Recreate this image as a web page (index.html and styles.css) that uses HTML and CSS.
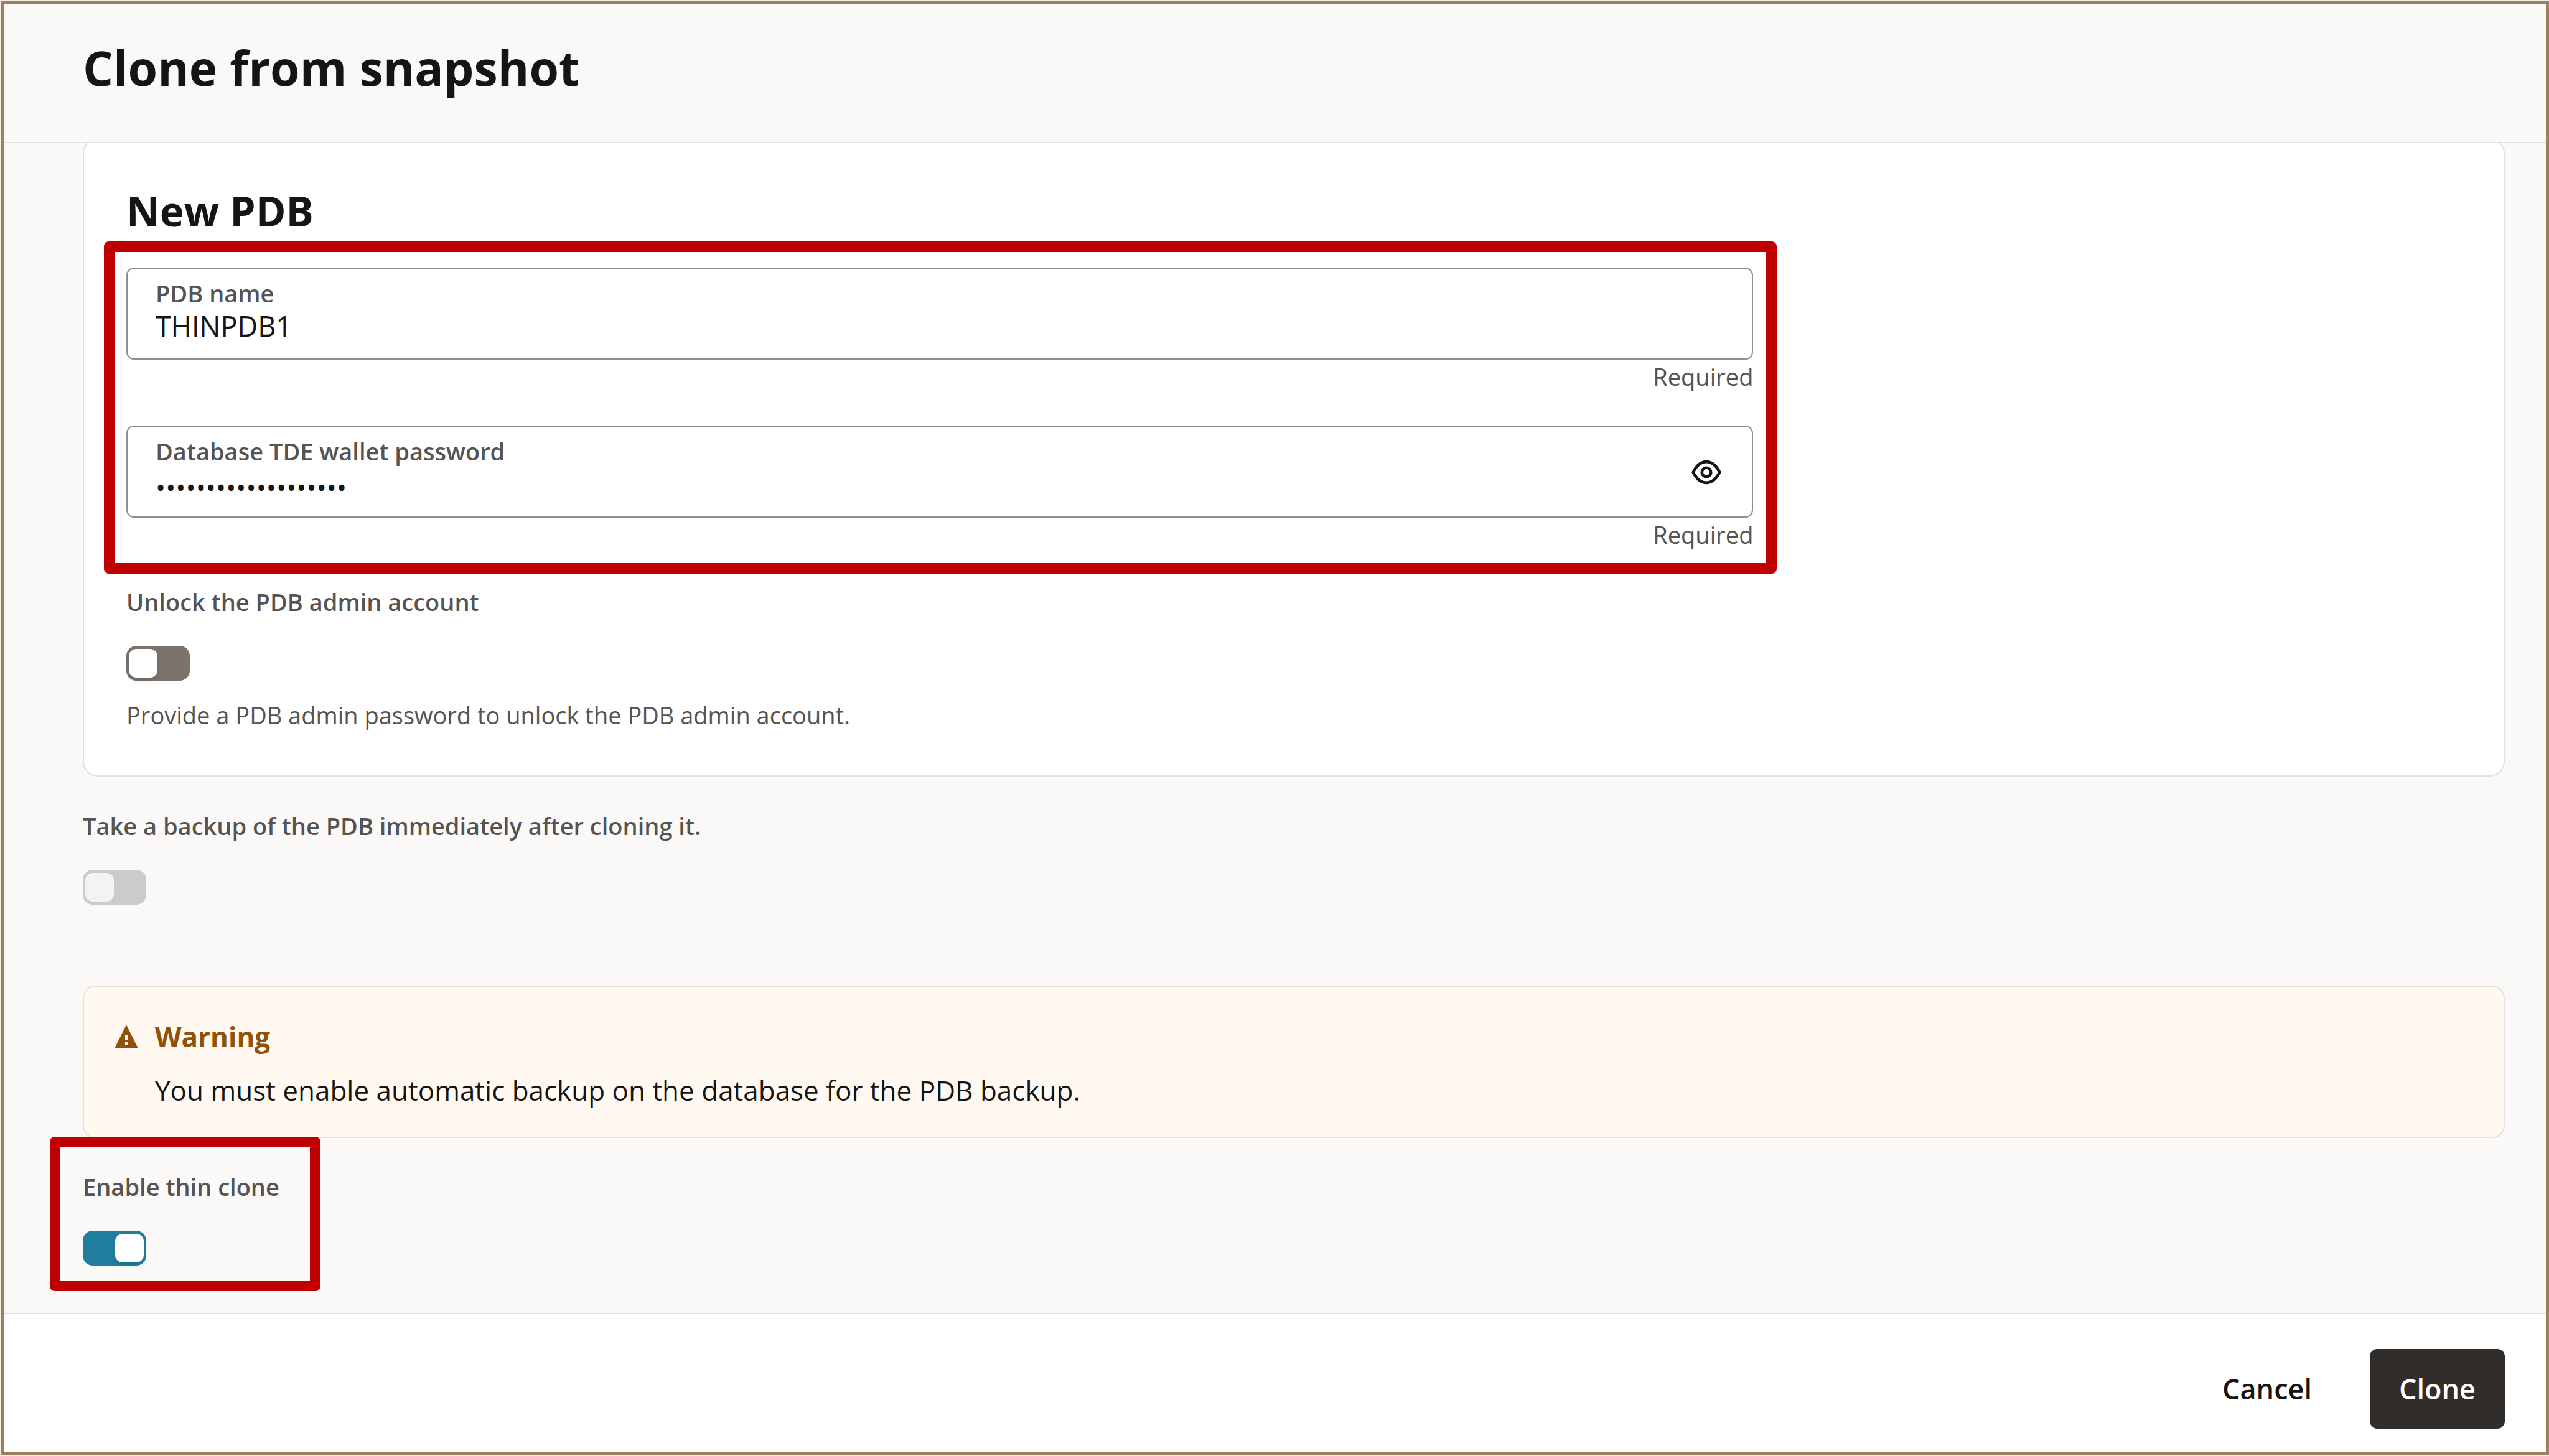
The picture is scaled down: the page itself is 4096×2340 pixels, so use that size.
FILE: index.html
```html
<!DOCTYPE html>
<html lang="en">
<head>
<meta charset="utf-8">
<meta name="viewport" content="width=device-width, initial-scale=1">
<title>Clone from snapshot</title>
<link rel="stylesheet" href="styles.css">
</head>
<body>
<form class="dialog">
  <header class="dialog-header">
    <h1 class="dialog-title">Clone from snapshot</h1>
  </header>

  <main class="dialog-body">
    <section class="card">
      <h2 class="card-title">New PDB</h2>
      <div class="fields callout callout-fields">
        <div class="field-group">
          <div class="field">
            <div class="field-main">
              <label class="field-label" for="pdb-name">PDB name</label>
              <input class="field-input" id="pdb-name" type="text" value="THINPDB1">
            </div>
          </div>
          <span class="field-note">Required</span>
        </div>
        <div class="field-group">
          <div class="field">
            <div class="field-main">
              <label class="field-label" for="tde-password">Database TDE wallet password</label>
              <input class="field-input field-input-secret" id="tde-password" type="password" value="walletpassword12345">
            </div>
            <button class="reveal" type="button" aria-label="Show password">
              <svg class="reveal-icon" viewBox="0 0 24 24" fill="none" stroke="currentColor" stroke-width="2" aria-hidden="true">
                <path d="M2.9 12C5.1 7.6 8.3 4.8 12 4.8S18.9 7.6 21.1 12C18.9 16.4 15.7 19.2 12 19.2S5.1 16.4 2.9 12Z"/>
                <circle cx="12" cy="12" r="3.1"/>
              </svg>
            </button>
          </div>
          <span class="field-note">Required</span>
        </div>
      </div>

      <div class="switch-field switch-field-unlock">
        <label class="switch-label" for="unlock-admin">Unlock the PDB admin account</label>
        <input class="switch" id="unlock-admin" type="checkbox" role="switch">
        <p class="switch-help">Provide a PDB admin password to unlock the PDB admin account.</p>
      </div>
    </section>

    <div class="switch-field switch-field-backup">
      <label class="switch-label" for="backup">Take a backup of the PDB immediately after cloning it.</label>
      <input class="switch" id="backup" type="checkbox" role="switch" disabled>
    </div>

    <section class="warning">
      <svg class="warning-icon" viewBox="0 0 38 38" aria-hidden="true">
        <path fill="currentColor" fill-rule="evenodd" d="M19 0L38 38H0ZM17 16V25H21V16ZM17 28V32H21V28Z"/>
      </svg>
      <div class="warning-text">
        <h3 class="warning-title">Warning</h3>
        <p class="warning-message">You must enable automatic backup on the database for the PDB backup.</p>
      </div>
    </section>

    <div class="switch-field switch-field-thin callout callout-thin">
      <label class="switch-label" for="thin-clone">Enable thin clone</label>
      <input class="switch" id="thin-clone" type="checkbox" role="switch" checked>
    </div>
  </main>

  <footer class="dialog-footer">
    <button class="button" type="button">Cancel</button>
    <button class="button button-primary" type="button">Clone</button>
  </footer>
</form>
</body>
</html>
```
FILE: styles.css
```css
:root {
  --ink: #161513;
  --ink-soft: #555452;
  --line: #e3e1df;
  --canvas: #fbf9f8;
  --callout: #c00000;
}

* {
  box-sizing: border-box;
}

body {
  margin: 0;
  padding: 1px 0 1px 1px;
  min-height: 100vh;
  display: flex;
  background: #f3eee8;
  color: var(--ink);
  font-family: "Open Sans", "Noto Sans", sans-serif;
  font-size: 44px;
  line-height: 56px;
}

h1, h2, h3, p {
  margin: 0;
}

input, button {
  font: inherit;
  color: inherit;
}

.dialog {
  flex: 1;
  min-width: 0;
  display: flex;
  flex-direction: column;
  border: 5px solid #9e7f5e;
  background: var(--canvas);
}

.dialog-header {
  padding: 51px 66px 67px 127px;
  border-bottom: 2px solid var(--line);
}

.dialog-title {
  font-size: 77px;
  line-height: 104px;
  font-weight: 700;
}

.dialog-body {
  flex: 1;
  padding: 0 66px 76px 127px;
  overflow: hidden;
}

.card {
  margin-top: -8px;
  padding: 74px 68px 72px;
  border: 2px solid var(--line);
  border-radius: 24px;
  background: #fff;
}

.card-title {
  font-size: 66px;
  line-height: 80px;
  font-weight: 700;
}

/* Red frames that point the reader to the relevant controls */
.callout {
  position: relative;
}

.callout::after {
  content: "";
  position: absolute;
  border: 17px solid var(--callout);
  border-radius: 8px;
  pointer-events: none;
}

.callout-fields::after {
  inset: -42px -38px -38px -36px;
}

.callout-thin::after {
  inset: -55px -66px -41px -53px;
}

.fields {
  width: calc(70% - 12px);
  margin-top: 52px;
  display: flex;
  flex-direction: column;
  gap: 54px;
}

.field-group {
  display: flex;
  flex-direction: column;
  gap: 2px;
}

.field {
  display: flex;
  align-items: center;
  padding: 14px 45px 24px;
  border: 2px solid #8f8e8c;
  border-radius: 12px;
  background: #fff;
}

.field-main {
  flex: 1;
  display: flex;
  flex-direction: column;
}

.field-label,
.switch-label {
  color: var(--ink-soft);
  font-size: 38px;
  line-height: 50px;
  font-weight: 600;
}

.field-input {
  width: 100%;
  height: 56px;
  padding: 0;
  border: 0;
  outline: 0;
  background: none;
  font-size: 45px;
}

.field-input-secret {
  padding-top: 12px;
  font-size: 43px;
}

.field-note,
.switch-help {
  color: var(--ink-soft);
  font-size: 38px;
  line-height: 50px;
}

.field-note {
  text-align: right;
}

.reveal {
  display: flex;
  margin-top: 12px;
  padding: 0;
  border: 0;
  background: none;
}

.reveal-icon {
  width: 56px;
  height: 56px;
}

.switch-field {
  width: fit-content;
  display: flex;
  flex-direction: column;
  align-items: flex-start;
}

.switch-field-unlock {
  margin-top: 58px;
}

.switch-field-backup {
  margin-top: 54px;
}

.switch-field-thin {
  margin-top: 53px;
}

.switch {
  appearance: none;
  display: flex;
  width: 102px;
  height: 56px;
  margin: 46px 0 0;
  padding: 5px 4px;
  border-radius: 16px;
  background: #7c736d;
}

.switch::before {
  content: "";
  width: 46px;
  height: 46px;
  border-radius: 12px;
  background: #fff;
  box-shadow: 0 4px 8px rgba(0, 0, 0, 0.12);
}

.switch:checked {
  justify-content: flex-end;
  background: #227e9e;
}

.switch:disabled {
  background: #cccbc9;
}

.switch:disabled::before {
  background: #f4f3f1;
  box-shadow: none;
}

.switch-help {
  margin-top: 30px;
}

.warning {
  display: flex;
  gap: 27px;
  margin-top: 130px;
  padding: 52px 49px 47px;
  border: 2px solid #e6e1da;
  border-radius: 20px;
  background: #fff9f2;
}

.warning-icon {
  width: 38px;
  height: 38px;
  margin-top: 9px;
  color: #8f520a;
}

.warning-text {
  flex: 1;
  display: flex;
  flex-direction: column;
  gap: 30px;
}

.warning-title {
  color: #8f520a;
  font-size: 44px;
  font-weight: 700;
}

.dialog-footer {
  display: flex;
  justify-content: flex-end;
  gap: 46px;
  padding: 56px 66px 38px;
  border-top: 2px solid var(--line);
  background: #fff;
}

.button {
  height: 128px;
  padding: 0 47px;
  border: 0;
  border-radius: 12px;
  background: none;
  font-size: 45px;
  font-weight: 600;
}

.button-primary {
  background: #312d2a;
  color: #fff;
}
```
